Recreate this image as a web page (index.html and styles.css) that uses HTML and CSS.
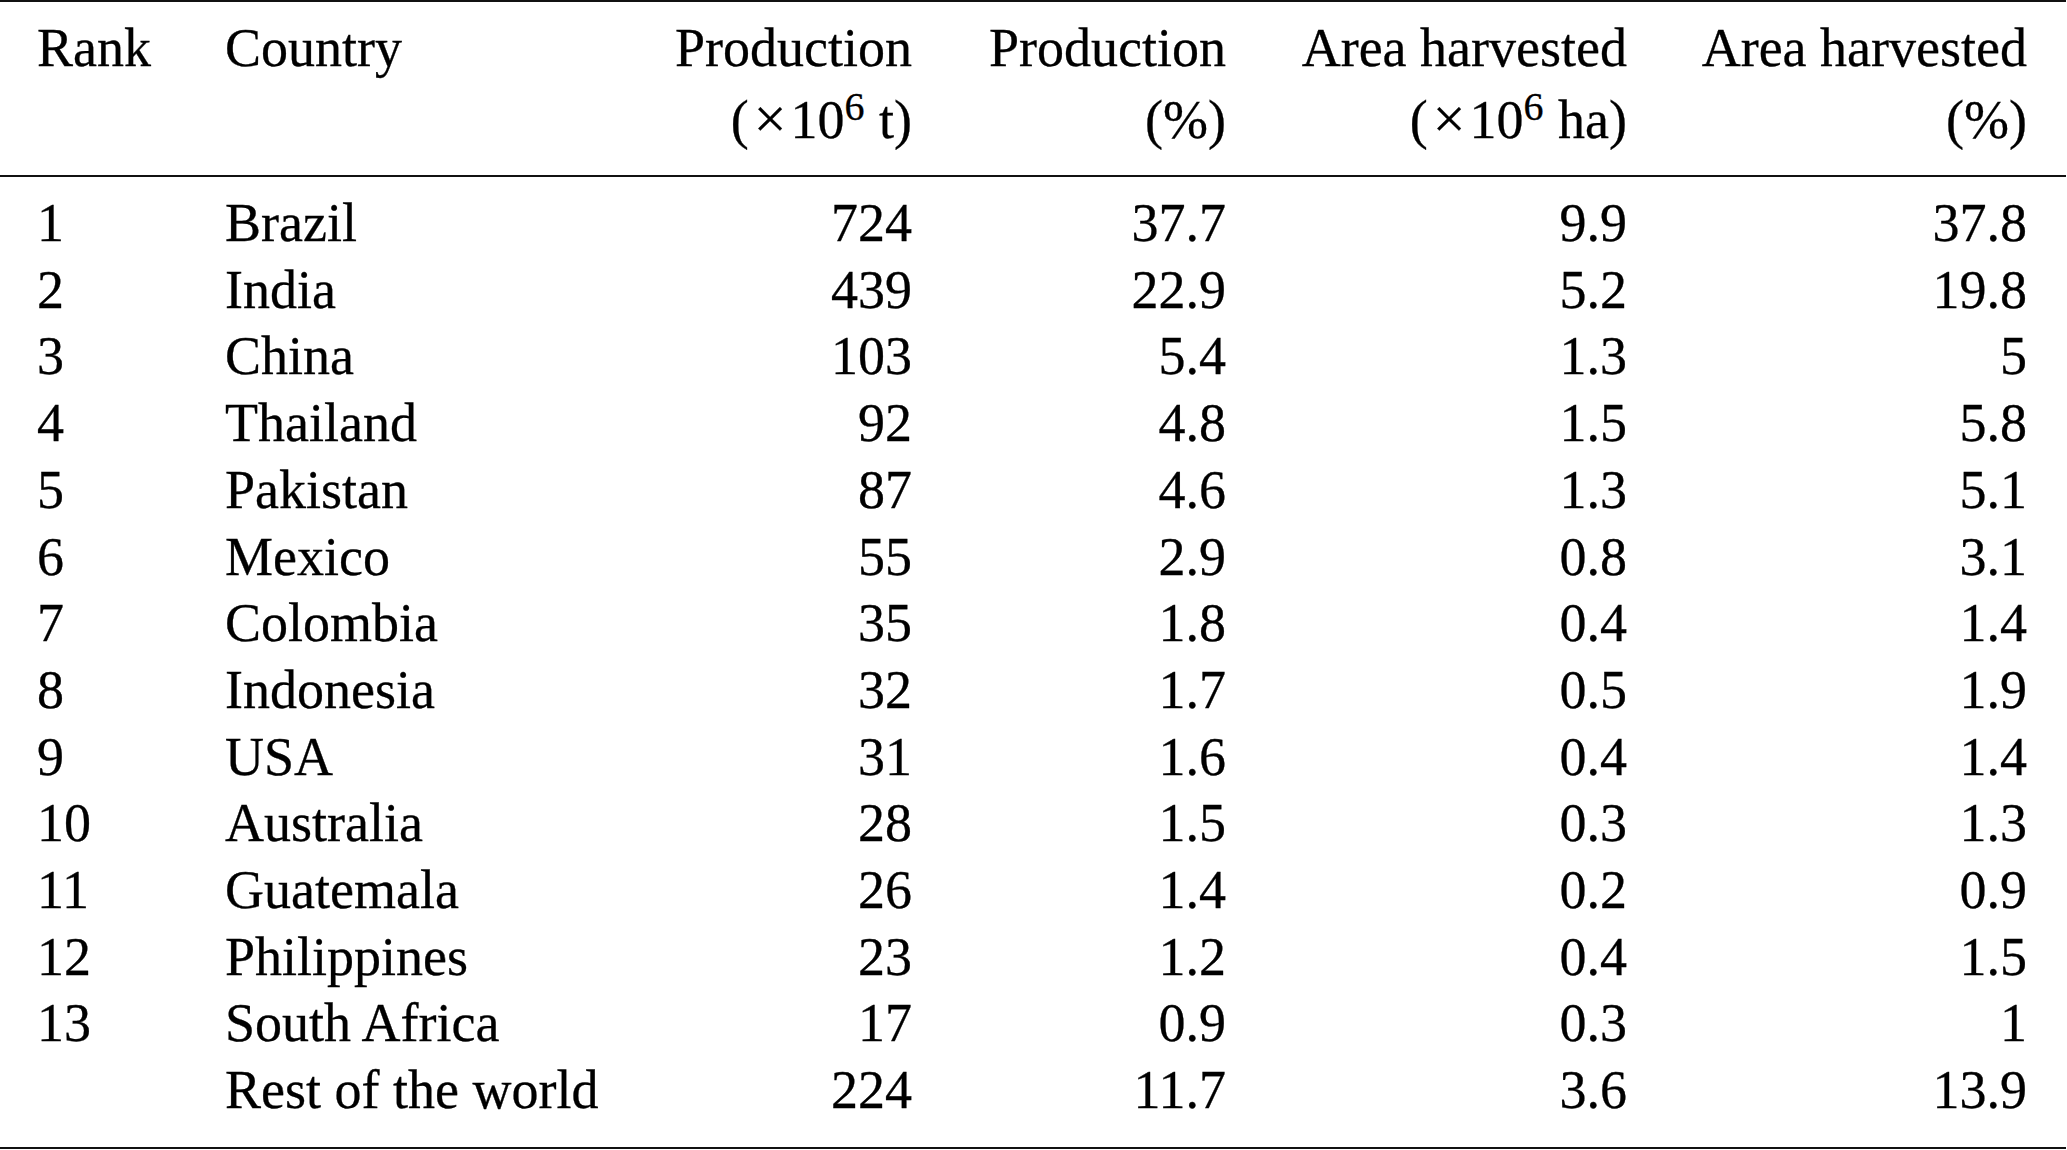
FILE: index.html
```html
<!DOCTYPE html>
<html lang="en">
<head>
<meta charset="utf-8">
<title>Sugarcane production by country</title>
<link rel="stylesheet" href="styles.css">
</head>
<body>
<table class="data">
  <colgroup>
    <col class="c-rank">
    <col class="c-country">
    <col class="c-prod">
    <col class="c-prodpct">
    <col class="c-area">
    <col class="c-areapct">
  </colgroup>
  <thead>
    <tr>
      <th class="l">Rank</th>
      <th class="l">Country</th>
      <th class="r">Production<br>(<span class="op">×</span>10<sup>6</sup> t)</th>
      <th class="r">Production<br>(%)</th>
      <th class="r">Area harvested<br>(<span class="op">×</span>10<sup>6</sup> ha)</th>
      <th class="r">Area harvested<br>(%)</th>
    </tr>
  </thead>
  <tbody>
    <tr><td class="l">1</td><td class="l">Brazil</td><td class="r">724</td><td class="r">37.7</td><td class="r">9.9</td><td class="r">37.8</td></tr>
    <tr><td class="l">2</td><td class="l">India</td><td class="r">439</td><td class="r">22.9</td><td class="r">5.2</td><td class="r">19.8</td></tr>
    <tr><td class="l">3</td><td class="l">China</td><td class="r">103</td><td class="r">5.4</td><td class="r">1.3</td><td class="r">5</td></tr>
    <tr><td class="l">4</td><td class="l">Thailand</td><td class="r">92</td><td class="r">4.8</td><td class="r">1.5</td><td class="r">5.8</td></tr>
    <tr><td class="l">5</td><td class="l">Pakistan</td><td class="r">87</td><td class="r">4.6</td><td class="r">1.3</td><td class="r">5.1</td></tr>
    <tr><td class="l">6</td><td class="l">Mexico</td><td class="r">55</td><td class="r">2.9</td><td class="r">0.8</td><td class="r">3.1</td></tr>
    <tr><td class="l">7</td><td class="l">Colombia</td><td class="r">35</td><td class="r">1.8</td><td class="r">0.4</td><td class="r">1.4</td></tr>
    <tr><td class="l">8</td><td class="l">Indonesia</td><td class="r">32</td><td class="r">1.7</td><td class="r">0.5</td><td class="r">1.9</td></tr>
    <tr><td class="l">9</td><td class="l">USA</td><td class="r">31</td><td class="r">1.6</td><td class="r">0.4</td><td class="r">1.4</td></tr>
    <tr><td class="l">10</td><td class="l">Australia</td><td class="r">28</td><td class="r">1.5</td><td class="r">0.3</td><td class="r">1.3</td></tr>
    <tr><td class="l">11</td><td class="l">Guatemala</td><td class="r">26</td><td class="r">1.4</td><td class="r">0.2</td><td class="r">0.9</td></tr>
    <tr><td class="l">12</td><td class="l">Philippines</td><td class="r">23</td><td class="r">1.2</td><td class="r">0.4</td><td class="r">1.5</td></tr>
    <tr><td class="l">13</td><td class="l">South Africa</td><td class="r">17</td><td class="r">0.9</td><td class="r">0.3</td><td class="r">1</td></tr>
    <tr><td class="l"></td><td class="l">Rest of the world</td><td class="r">224</td><td class="r">11.7</td><td class="r">3.6</td><td class="r">13.9</td></tr>
  </tbody>
</table>
</body>
</html>
```

FILE: styles.css
```css
html, body {
  margin: 0;
  padding: 0;
  background: #ffffff;
}

body {
  font-family: "Liberation Serif", "Times New Roman", serif;
  font-size: 54px;
  color: #000000;
  -webkit-text-stroke: 0.3px #000000;
}

.data {
  width: 2066px;
  table-layout: fixed;
  border-collapse: separate;
  border-spacing: 0;
}

.c-rank { width: 188px; }
.c-country { width: 449px; }
.c-prod { width: 313px; }
.c-prodpct { width: 314px; }
.c-area { width: 401px; }
.c-areapct { width: 401px; }

.data th,
.data td {
  box-sizing: border-box;
  padding: 0;
  white-space: nowrap;
  font-weight: normal;
  vertical-align: top;
}

.data th.l,
.data td.l {
  text-align: left;
  padding-left: 37px;
}

.data th.r,
.data td.r {
  text-align: right;
  padding-right: 38px;
}

.data th:last-child,
.data td:last-child {
  padding-right: 39px;
}

.data thead th {
  line-height: 71.5px;
  padding-top: 11px;
  padding-bottom: 19px;
  border-top: 2px solid #111;
  border-bottom: 2px solid #111;
}

.data tbody td {
  line-height: 66.7px;
}

.data tbody tr:first-child td {
  padding-top: 13px;
}

.data tbody tr:last-child td {
  padding-bottom: 23px;
  border-bottom: 2px solid #111;
}

.op {
  font-size: 58px;
  line-height: 0;
  margin: 0 4px 0 5px;
}

sup {
  font-size: 40px;
  line-height: 0;
  vertical-align: 18px;
  margin-right: 1px;
}
```
